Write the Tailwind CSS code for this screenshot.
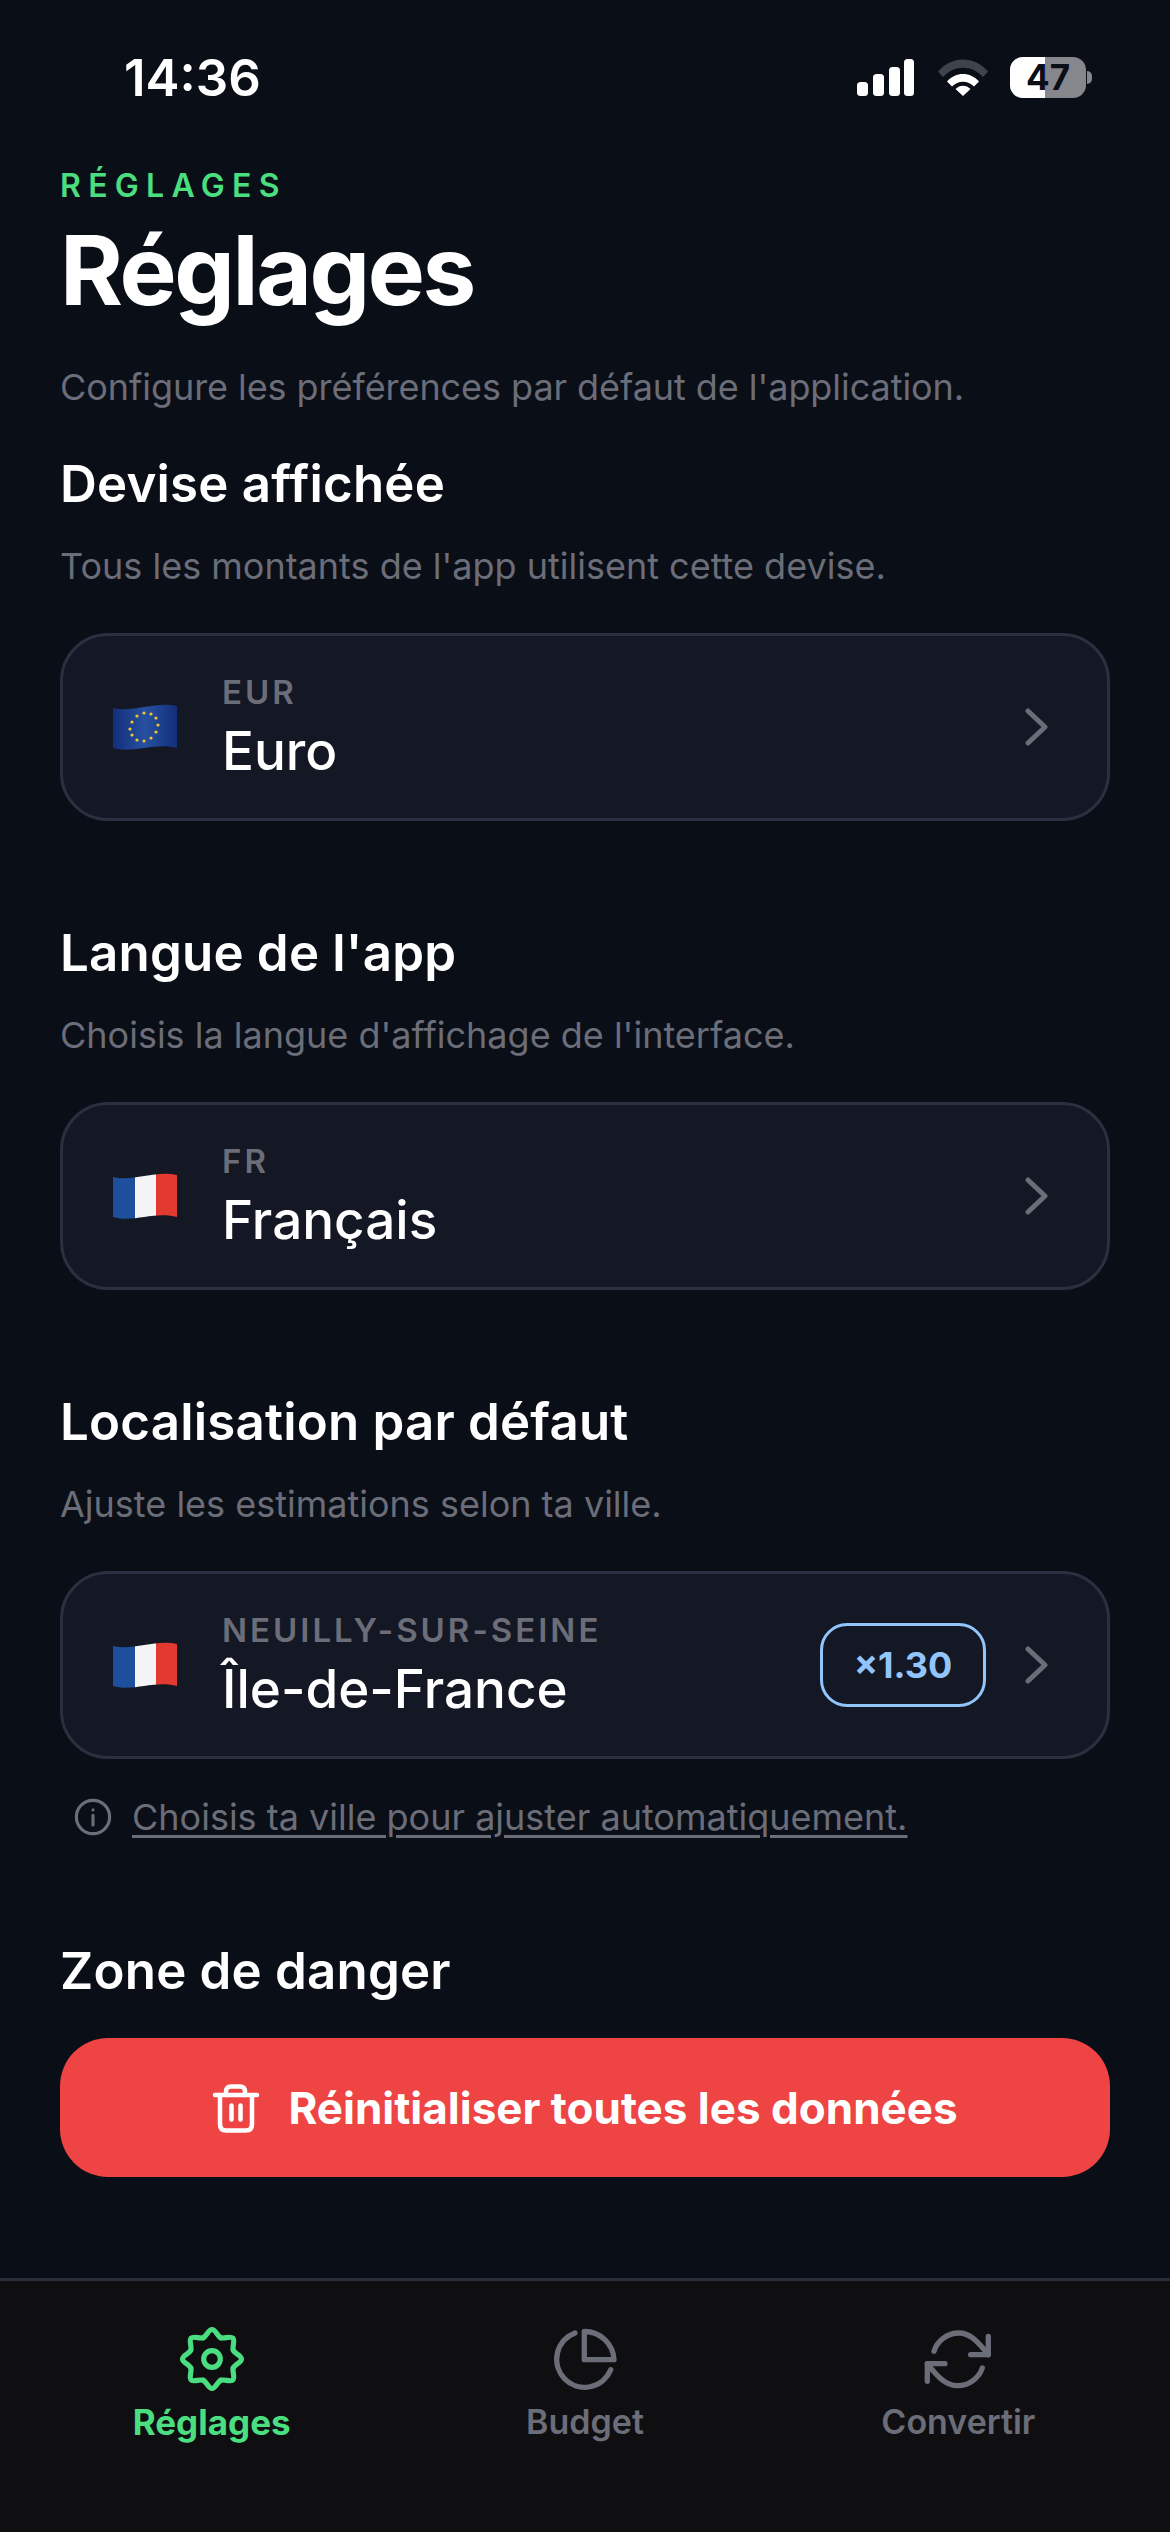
<!doctype html>
<html><head><meta charset="utf-8"><script src="https://cdn.jsdelivr.net/npm/@tailwindcss/browser@4"></script></head>
<body class="bg-[#0a0e17]">
<div class="w-[1170px] h-[2532px] flex flex-col overflow-hidden bg-[#0a0e17] font-['Inter',sans-serif] text-white">
  <!-- status bar -->
  <div class="h-[165px] shrink-0 pl-[124px] pr-[78px] pt-[50px] flex items-start justify-between">
    <span class="text-[51px] leading-[56px] font-semibold">14:36</span>
    <div class="flex items-center gap-[24px] mt-[7px]">
      <svg width="57" height="37" viewBox="0 0 57 37" fill="#fff"><rect x="0" y="23" width="11" height="14" rx="3.5"/><rect x="16" y="15" width="11" height="22" rx="3.5"/><rect x="32" y="8" width="11" height="29" rx="3.5"/><rect x="47" y="0" width="10" height="37" rx="3.5"/></svg>
      <svg width="50" height="37" viewBox="0 0 50 37"><path d="M0 12.500C13.500 -3.500 36.500 -3.500 50 12.500L45 18C34 5.500 16 5.500 5 18Z" fill="#3f434c"/><path d="M9 22.500C17.500 12.500 32.500 12.500 41 22.500L36 27.500C30 21 20 21 14 27.500Z" fill="#fff"/><path d="M17.500 30C21.500 25.500 28.500 25.500 32.500 30L25 37Z" fill="#fff"/></svg>
      <div class="flex items-center gap-[1px] -ml-[2px]">
        <div class="relative w-[76px] h-[41px] rounded-[13px] overflow-hidden bg-[#85878c] flex items-center justify-center">
          <div class="absolute left-0 top-0 bottom-0 w-[35px] bg-white"></div>
          <span class="relative text-[#0a0e17] text-[35px] leading-[41px] font-bold">47</span>
        </div>
        <div class="w-[5px] h-[13px] rounded-r-full bg-[#85878c]"></div>
      </div>
    </div>
  </div>

  <main class="flex-1 px-[60px]">
    <!-- header -->
    <div class="h-[42px] flex items-center text-[32px] leading-[42px] font-semibold tracking-[7.3px] text-[#4ade80]">RÉGLAGES</div>
    <h1 class="mt-[8px] text-[96px] leading-[110px] font-bold tracking-[-2.4px]">Réglages</h1>
    <p class="mt-[40px] text-[36px] leading-[44px] tracking-[-0.06px] text-[#6b6d78]">Configure les préférences par défaut de l'application.</p>

    <!-- devise -->
    <h2 class="mt-[45px] text-[51px] leading-[60px] font-semibold tracking-[0.2px]">Devise affichée</h2>
    <p class="mt-[30px] text-[36px] leading-[44px] text-[#6b6d78]">Tous les montants de l'app utilisent cette devise.</p>
    <div class="mt-[45px] h-[188px] rounded-[48px] border-[3px] border-[#2a3040] bg-[#141824] pl-[50px] pr-[57px] flex items-center">
      <svg class="shrink-0" width="64" height="46" viewBox="0 0 64 46">
        <defs><linearGradient id="eu" x1="0" y1="0" x2="1" y2="0"><stop offset="0" stop-color="#122f7a"/><stop offset=".5" stop-color="#27509f"/><stop offset="1" stop-color="#122f7a"/></linearGradient></defs>
        <path d="M0 4C20 9 42 -3 64 2V44C42 38 20 50 0 44Z" fill="url(#eu)"/>
        <g fill="#f3c433"><circle cx="31" cy="9" r="1.600"/><circle cx="38" cy="10" r="1.600"/><circle cx="43" cy="14" r="1.600"/><circle cx="45" cy="21" r="1.600"/><circle cx="43" cy="28" r="1.600"/><circle cx="38" cy="34" r="1.600"/><circle cx="31" cy="37" r="1.600"/><circle cx="24" cy="36" r="1.600"/><circle cx="19" cy="31" r="1.600"/><circle cx="17" cy="25" r="1.600"/><circle cx="19" cy="18" r="1.600"/><circle cx="24" cy="12" r="1.600"/></g>
      </svg>
      <div class="ml-[45px] flex-1 flex flex-col">
        <span class="text-[33px] leading-[40px] font-semibold tracking-[3px] text-[#6b6d78]">EUR</span>
        <span class="mt-[8px] text-[53px] leading-[62px] font-medium">Euro</span>
      </div>
      <svg width="26" height="38" viewBox="0 0 26 38" fill="none" stroke="#6b6d78" stroke-width="5" stroke-linecap="round" stroke-linejoin="round"><path d="M4 3L21 19L4 35"/></svg>
    </div>

    <!-- langue -->
    <h2 class="mt-[102px] text-[51px] leading-[60px] font-semibold tracking-[0.2px]">Langue de l'app</h2>
    <p class="mt-[30px] text-[36px] leading-[44px] text-[#6b6d78]">Choisis la langue d'affichage de l'interface.</p>
    <div class="mt-[45px] h-[188px] rounded-[48px] border-[3px] border-[#2a3040] bg-[#141824] pl-[50px] pr-[57px] flex items-center">
      <svg class="shrink-0" width="64" height="46" viewBox="0 0 64 46">
        <defs><clipPath id="wave1"><path d="M0 4C20 9 42 -3 64 2V44C42 38 20 50 0 44Z"/></clipPath></defs>
        <g clip-path="url(#wave1)"><rect x="0" y="0" width="22" height="46" fill="#1d4f9c"/><rect x="22" y="0" width="21" height="46" fill="#f4f4f6"/><rect x="43" y="0" width="21" height="46" fill="#e23a30"/></g>
      </svg>
      <div class="ml-[45px] flex-1 flex flex-col">
        <span class="text-[33px] leading-[40px] font-semibold tracking-[3px] text-[#6b6d78]">FR</span>
        <span class="mt-[8px] text-[53px] leading-[62px] font-medium">Français</span>
      </div>
      <svg width="26" height="38" viewBox="0 0 26 38" fill="none" stroke="#6b6d78" stroke-width="5" stroke-linecap="round" stroke-linejoin="round"><path d="M4 3L21 19L4 35"/></svg>
    </div>

    <!-- localisation -->
    <h2 class="mt-[102px] text-[51px] leading-[60px] font-semibold tracking-[0.2px]">Localisation par défaut</h2>
    <p class="mt-[30px] text-[36px] leading-[44px] text-[#6b6d78]">Ajuste les estimations selon ta ville.</p>
    <div class="mt-[45px] h-[188px] rounded-[48px] border-[3px] border-[#2a3040] bg-[#141824] pl-[50px] pr-[57px] flex items-center">
      <svg class="shrink-0" width="64" height="46" viewBox="0 0 64 46">
        <defs><clipPath id="wave2"><path d="M0 4C20 9 42 -3 64 2V44C42 38 20 50 0 44Z"/></clipPath></defs>
        <g clip-path="url(#wave2)"><rect x="0" y="0" width="22" height="46" fill="#1d4f9c"/><rect x="22" y="0" width="21" height="46" fill="#f4f4f6"/><rect x="43" y="0" width="21" height="46" fill="#e23a30"/></g>
      </svg>
      <div class="ml-[45px] flex-1 flex flex-col">
        <span class="text-[33px] leading-[40px] font-semibold tracking-[3px] text-[#6b6d78]">NEUILLY-SUR-SEINE</span>
        <span class="mt-[8px] text-[53px] leading-[62px] font-medium">Île-de-France</span>
      </div>
      <div class="w-[166px] h-[84px] mr-[38px] rounded-[27px] border-[3px] border-[#93c5fd] flex items-center justify-center text-[36px] font-bold text-[#93c5fd]">×1.30</div>
      <svg width="26" height="38" viewBox="0 0 26 38" fill="none" stroke="#6b6d78" stroke-width="5" stroke-linecap="round" stroke-linejoin="round"><path d="M4 3L21 19L4 35"/></svg>
    </div>
    <div class="mt-[36px] ml-[14px] flex items-center gap-[20px]">
      <svg width="38" height="38" viewBox="0 0 24 24" fill="none" stroke="#6b6d78" stroke-width="2" stroke-linecap="round"><circle cx="12" cy="12" r="10.500"/><path d="M12 11v6"/><path d="M12 7.500v.01"/></svg>
      <span class="text-[36px] leading-[44px] text-[#6b6d78] underline underline-offset-[5px]">Choisis ta ville pour ajuster automatiquement.</span>
    </div>

    <!-- danger -->
    <h2 class="mt-[102px] text-[51px] leading-[60px] font-semibold tracking-[0.2px]">Zone de danger</h2>
    <div class="mt-[37px] h-[139px] rounded-[48px] bg-[#ef4444] flex items-center justify-center gap-[28px]">
      <svg width="48" height="50" viewBox="14 14 48 50" fill="none" stroke="#fff" stroke-width="4.500" stroke-linecap="round" stroke-linejoin="round"><path d="M17 26H59"/><path d="M28 26V23C28 19 30 17.500 33 17.500H42C45 17.500 47 19 47 23V26"/><path d="M22 26V55C22 59.500 24.500 61.500 28 61.500H48C51.500 61.500 54 59.500 54 55V26"/><path d="M33.500 36.500V50.500"/><path d="M42.500 36.500V50.500"/></svg>
      <span class="text-[44px] leading-[56px] font-bold">Réinitialiser toutes les données</span>
    </div>
  </main>

  <!-- tab bar -->
  <nav class="h-[254px] shrink-0 border-t-[3px] border-[#2a2e3a] bg-[#0f0f11] grid grid-cols-3 px-[25px] pt-[42px]">
    <div class="flex flex-col items-center text-[#4ade80]">
      <svg width="72" height="72" viewBox="-3 -3 72 72" fill="none" stroke="currentColor" stroke-width="5.200" stroke-linecap="round" stroke-linejoin="round">
        <path id="tooth" d="M24.200 11.750C27.500 10.380 29.400 3.500 33 3.500C36.600 3.500 38.500 10.380 41.800 11.750"/>
        <use href="#tooth" transform="rotate(45 33 33)"/><use href="#tooth" transform="rotate(90 33 33)"/><use href="#tooth" transform="rotate(135 33 33)"/><use href="#tooth" transform="rotate(180 33 33)"/><use href="#tooth" transform="rotate(225 33 33)"/><use href="#tooth" transform="rotate(270 33 33)"/><use href="#tooth" transform="rotate(315 33 33)"/>
        <circle cx="33" cy="33" r="8.300"/>
      </svg>
      <span class="mt-[7px] text-[35px] leading-[40px] font-bold">Réglages</span>
    </div>
    <div class="flex flex-col items-center text-[#6b6d78]">
      <svg width="72" height="72" viewBox="9 10 72 72" fill="none" stroke="currentColor" stroke-width="5.300" stroke-linecap="round" stroke-linejoin="round"><path d="M35 20A28 28 0 1 0 70.700 56.700"/><path d="M44.300 18.500V46.700H74A29.500 29.500 0 0 0 44.300 18.500Z"/></svg>
      <span class="mt-[7px] text-[34px] leading-[40px] font-semibold">Budget</span>
    </div>
    <div class="flex flex-col items-center text-[#6b6d78]">
      <svg width="72" height="72" viewBox="13 10 72 72" fill="none" stroke="currentColor" stroke-width="5.300" stroke-linecap="round" stroke-linejoin="round"><path d="M25 38.300C28 28 38 20 50 20C60 20 68 27 79.300 41.700"/><path d="M79.300 23.300V41.700H61.700"/><path d="M73.300 55C70 65 60 72.700 48.500 72.700C38 72.700 30 66 18.300 50.700"/><path d="M18.300 68.300V50.700H36"/></svg>
      <span class="mt-[7px] text-[34px] leading-[40px] font-semibold">Convertir</span>
    </div>
  </nav>
</div>
</body></html>
